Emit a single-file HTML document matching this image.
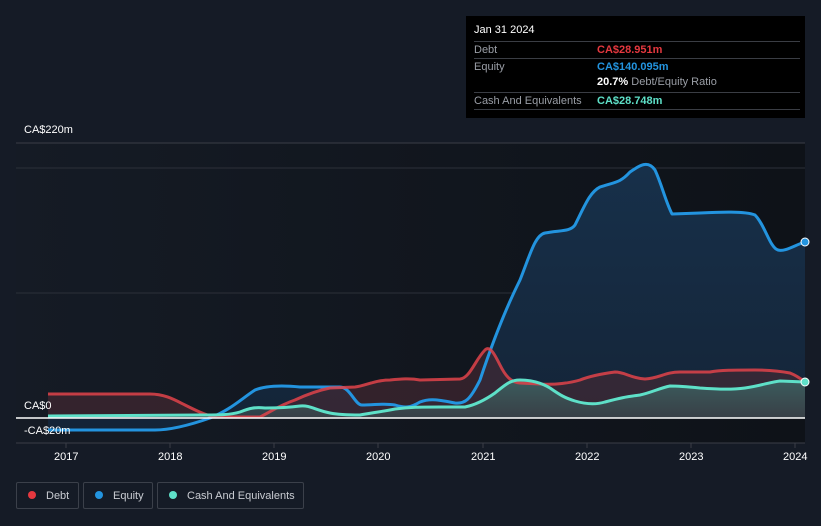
<!DOCTYPE html>
<html><head><style>
body{margin:0;width:821px;height:526px;background:#151b26;font-family:"Liberation Sans",sans-serif;overflow:hidden;position:relative}
.t{position:absolute;font-size:11px;color:#fff}
.tip{position:absolute;left:466px;top:16px;width:339px;height:102px;background:#000}
.tip .r{position:absolute;left:8px;width:326px;border-top:1px solid #3a3d44;font-size:11px;color:#9a9ea6}
.lg{position:absolute;top:482px;height:27px;border:1px solid #3b404a;border-radius:2px;color:#c9ccd2;font-size:11px;line-height:27px;box-sizing:border-box}
.lg i{display:inline-block;width:8px;height:8px;border-radius:50%;margin:0 10px 0 11px;vertical-align:-0px}
</style></head><body>
<svg width="821" height="526" style="position:absolute;left:0;top:0">
<defs>
<linearGradient id="pb" x1="0" x2="1"><stop offset="0" stop-color="#151b25"/><stop offset="1" stop-color="#0e1218"/></linearGradient>
<linearGradient id="eq" x1="0" y1="0" x2="0" y2="1"><stop offset="0" stop-color="#17304a"/><stop offset="1" stop-color="#142437"/></linearGradient>
<linearGradient id="ca" x1="0" y1="0" x2="0" y2="1"><stop offset="0" stop-color="#3d6a68" stop-opacity=".8"/><stop offset="1" stop-color="#3a4a4e" stop-opacity=".7"/></linearGradient>
</defs>
<rect x="16" y="143" width="789" height="300" fill="url(#pb)"/>
<line x1="16" y1="143" x2="805" y2="143" stroke="#3a3e47"/>
<line x1="16" y1="168" x2="805" y2="168" stroke="#2c3039"/>
<line x1="16" y1="293" x2="805" y2="293" stroke="#2c3039"/>
<line x1="16" y1="443" x2="805" y2="443" stroke="#3a3e47"/>
<g stroke="#3a3e47"><line x1="66" y1="443" x2="66" y2="448"/><line x1="170" y1="443" x2="170" y2="448"/><line x1="274" y1="443" x2="274" y2="448"/><line x1="378" y1="443" x2="378" y2="448"/><line x1="483" y1="443" x2="483" y2="448"/><line x1="587" y1="443" x2="587" y2="448"/><line x1="691" y1="443" x2="691" y2="448"/><line x1="795" y1="443" x2="795" y2="448"/></g>
<path id="e" d="M48,430 L155,430 C170,430 190,425 210,418 C230,410 240,400 255,390 C265,386 280,385 300,387 L340,387 C350,387 355,405 362,405 C375,405 385,403 395,405 C405,408 410,408 420,402 C430,398 440,400 455,403 C465,404 470,400 480,380 C490,350 505,310 520,280 C530,255 535,235 545,233 C560,230 570,232 575,225 C585,205 590,192 600,187 C615,182 620,183 630,172 C640,165 648,160 655,170 C662,185 665,200 672,214 L700,213 C720,212 745,211 755,215 C765,225 770,248 778,250 C785,252 795,245 805,242 L805,418 L48,418Z" fill="url(#eq)"/>
<path d="M48,394 L150,394 C165,394 175,400 185,405 C195,410 205,415 215,417 L260,417 C270,412 280,405 295,400 C310,393 320,390 330,388 L355,387 C365,386 375,380 390,380 C400,379 410,378 420,380 L460,379 C470,378 475,360 485,350 C490,345 495,355 500,365 C505,375 510,382 520,383 L540,384 C555,385 570,383 580,380 C590,376 600,374 615,372 C625,372 630,378 645,379 C660,378 665,372 680,372 L710,372 C720,370 735,370 755,370 C770,370 780,371 790,373 C795,375 800,378 805,382 L805,418 L48,418Z" fill="#4a2a33" fill-opacity=".6"/>
<path d="M48,416 L200,415 C220,415 230,415 240,412 C250,408 255,407 265,408 C275,408 285,408 300,406 C310,405 315,410 330,413 C340,415 350,415 360,415 C370,413 380,412 395,409 C410,407 420,407 440,407 L465,407 C475,405 485,400 495,393 C505,385 510,380 520,380 C530,380 540,382 550,388 C560,395 565,398 575,401 C585,404 595,405 605,402 C620,398 625,397 640,395 C650,393 660,388 670,386 C680,386 690,387 700,388 C715,389 730,390 745,388 C760,386 770,382 780,381 L805,382 L805,418 L48,418Z" fill="url(#ca)"/>
<g fill="none" stroke-width="3" stroke-linejoin="round">
<path d="M48,430 L155,430 C170,430 190,425 210,418 C230,410 240,400 255,390 C265,386 280,385 300,387 L340,387 C350,387 355,405 362,405 C375,405 385,403 395,405 C405,408 410,408 420,402 C430,398 440,400 455,403 C465,404 470,400 480,380 C490,350 505,310 520,280 C530,255 535,235 545,233 C560,230 570,232 575,225 C585,205 590,192 600,187 C615,182 620,183 630,172 C640,165 648,160 655,170 C662,185 665,200 672,214 L700,213 C720,212 745,211 755,215 C765,225 770,248 778,250 C785,252 795,245 805,242" stroke="#2394df"/>
<path d="M48,394 L150,394 C165,394 175,400 185,405 C195,410 205,415 215,417 L260,417 C270,412 280,405 295,400 C310,393 320,390 330,388 L355,387 C365,386 375,380 390,380 C400,379 410,378 420,380 L460,379 C470,378 475,360 485,350 C490,345 495,355 500,365 C505,375 510,382 520,383 L540,384 C555,385 570,383 580,380 C590,376 600,374 615,372 C625,372 630,378 645,379 C660,378 665,372 680,372 L710,372 C720,370 735,370 755,370 C770,370 780,371 790,373 C795,375 800,378 805,382" stroke="#e0434a" stroke-opacity=".85"/>
<path d="M48,416 L200,415 C220,415 230,415 240,412 C250,408 255,407 265,408 C275,408 285,408 300,406 C310,405 315,410 330,413 C340,415 350,415 360,415 C370,413 380,412 395,409 C410,407 420,407 440,407 L465,407 C475,405 485,400 495,393 C505,385 510,380 520,380 C530,380 540,382 550,388 C560,395 565,398 575,401 C585,404 595,405 605,402 C620,398 625,397 640,395 C650,393 660,388 670,386 C680,386 690,387 700,388 C715,389 730,390 745,388 C760,386 770,382 780,381 L805,382" stroke="#5ee0c8"/>
</g>
<line x1="16" y1="418" x2="805" y2="418" stroke="#fff" stroke-width="1.5"/>
<circle cx="805" cy="242" r="4" fill="#2394df" stroke="#fff" stroke-width="1"/>
<circle cx="805" cy="382" r="4" fill="#5ee0c8" stroke="#fff" stroke-width="1"/>
</svg>
<div class="t" style="left:24px;top:124px">CA$220m</div>
<div class="t" style="left:24px;top:400px">CA$0</div>
<div class="t" style="left:24px;top:425px">-CA$20m</div>
<div class="t" style="left:54px;top:451px">2017</div>
<div class="t" style="left:158px;top:451px">2018</div>
<div class="t" style="left:262px;top:451px">2019</div>
<div class="t" style="left:366px;top:451px">2020</div>
<div class="t" style="left:471px;top:451px">2021</div>
<div class="t" style="left:575px;top:451px">2022</div>
<div class="t" style="left:679px;top:451px">2023</div>
<div class="t" style="left:783px;top:451px">2024</div>
<div class="tip">
<div style="position:absolute;left:8px;top:8px;color:#fff;font-size:11px">Jan 31 2024</div>
<div class="r" style="top:25px;height:16px;line-height:16px">Debt<span style="position:absolute;left:123px;color:#e5383f;font-weight:bold">CA$28.951m</span></div>
<div class="r" style="top:42px;height:16px;line-height:16px">Equity<span style="position:absolute;left:123px;color:#2394df;font-weight:bold">CA$140.095m</span></div>
<div style="position:absolute;left:131px;top:60px;font-size:11px;color:#9a9ea6"><b style="color:#fff">20.7%</b> Debt/Equity Ratio</div>
<div class="r" style="top:76px;height:16px;line-height:16px;border-bottom:1px solid #3a3d44">Cash And Equivalents<span style="position:absolute;left:123px;color:#5ee0c8;font-weight:bold">CA$28.748m</span></div>
</div>
<div class="lg" style="left:16px;width:63px"><i style="background:#e5383f"></i>Debt</div>
<div class="lg" style="left:83px;width:70px"><i style="background:#2394df"></i>Equity</div>
<div class="lg" style="left:157px;width:147px"><i style="background:#5ee0c8"></i>Cash And Equivalents</div>
</body></html>
